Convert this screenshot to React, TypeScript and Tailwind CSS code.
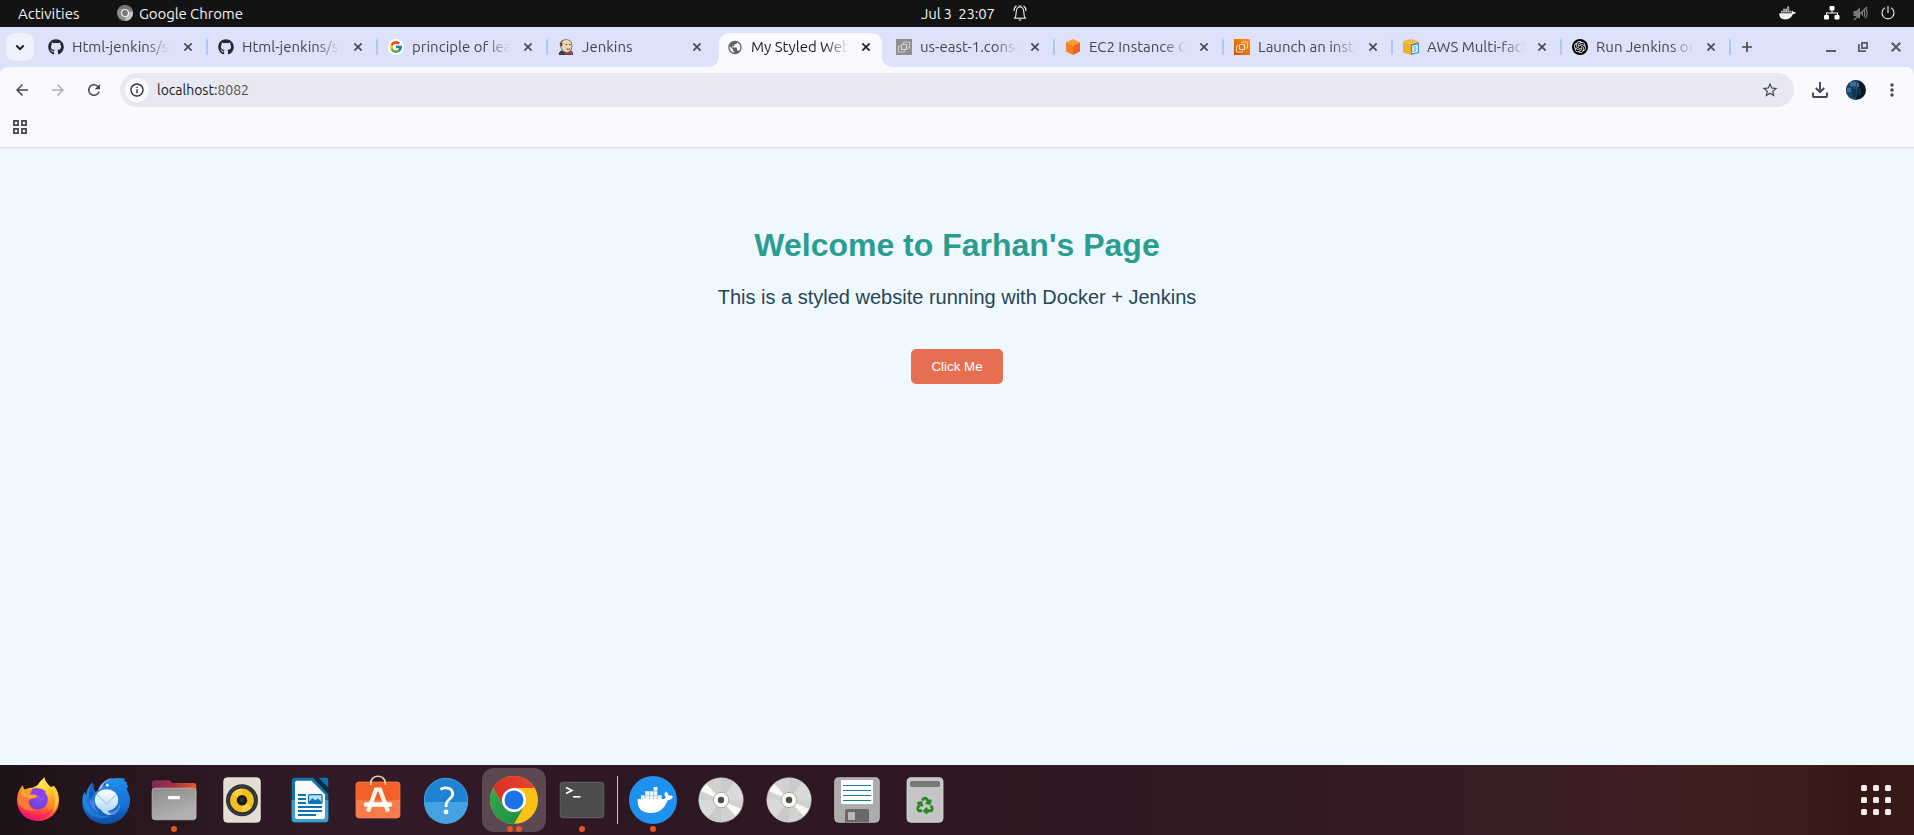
import React from "react";
import { FcGoogle } from "react-icons/fc";
import { FaGithub, FaRecycle } from "react-icons/fa";
import { SiOpenai } from "react-icons/si";
import {
  MdArrowBack,
  MdArrowForward,
  MdInfoOutline,
  MdMoreVert,
  MdPublic,
  MdRefresh,
  MdStarOutline,
} from "react-icons/md";

const uiFont = "font-['Ubuntu','Noto_Sans',sans-serif]";

/* ---------- Top panel ---------- */

function TopPanel() {
  return (
    <header className="grid h-[27px] shrink-0 grid-cols-3 items-center bg-[#131313] pb-px text-[15px] leading-none text-[#f2f2f2]">
      <div className="flex items-center pl-[18px]">
        <span className="w-[99px]">Activities</span>
        <svg width="16" height="16" viewBox="0 0 16 16" className="mr-[6px]">
          <circle cx="8" cy="8" r="8" fill="#8a8a8a" />
          <path d="M8 8 L15.8 6.5 A8 8 0 0 1 8.5 16 Z" fill="#c4c4c4" />
          <path d="M1.5 3.5 A8 8 0 0 1 15 4.4 H8 Z" fill="#747474" />
          <circle cx="8" cy="8" r="4" fill="#f0f0f0" />
          <circle cx="8" cy="8" r="2.9" fill="#777" />
        </svg>
        <span className="tracking-[-0.1px]">Google Chrome</span>
      </div>
      <div className="flex items-center justify-center pl-[34px]">
        <span className="mr-[18px] whitespace-pre tracking-[-0.2px]">Jul 3  23:07</span>
        <svg width="14" height="16" viewBox="0 0 14 16" fill="none" stroke="#eee" strokeWidth="1.1">
          <path d="M2 13 C3 11.5 3 10 3.2 7 C3.4 4 4.7 2 7 2 C9.300 2 10.600 4 10.800 7 C11 10 11 11.500 12 13" />
          <path d="M.8 13.200 H13.200" />
          <path d="M5.200 14.600 H8.800 L7 16 Z" fill="#eee" strokeWidth="0" />
          <path d="M1 6 C1 3.500 2 1.800 3.500 .8 M13 6 C13 3.500 12 1.800 10.500 .8" />
          <path d="M5.500 1 H8.500" />
        </svg>
      </div>
      <div className="flex items-center justify-end pr-[19px]">
        <svg width="17" height="14" viewBox="0 0 17 14" fill="#f2f2f2" className="mr-[28px]">
          <path d="M.3 7.200 H12.600 C13 6.500 12.500 5.500 13 4.400 C14 5 14.300 5.500 14.400 6.200 C15.300 6 16.200 6.100 16.800 6.500 C16.300 7.500 15.300 8 14 8 C12.500 11.500 10.300 13.400 6.300 13.400 C2 13.400 .1 11 .3 7.200 Z" />
          <path d="M2 4.800h1.800v1.800H2z M4.100 4.800h1.800v1.800H4.100z M6.200 4.800H8v1.800H6.200z M8.300 4.800h1.800v1.800H8.300z M10.400 4.800h1.800v1.800h-1.800z M4.100 2.700h1.800v1.800H4.100z M6.200 2.700H8v1.800H6.200z M8.300 2.700h1.800v1.800H8.300z M8.300 .6h1.800v1.800H8.300z" opacity=".8" />
        </svg>
        <svg width="16" height="14" viewBox="0 0 16 14" fill="#fff" className="mr-[13px]">
          <rect x="5.500" y="0" width="5" height="4.500" rx="1" />
          <path d="M7.500 4 h1 v3 h-1z M2 6.500 h12 v3 h-1 v-2 H3 v2 H2z" />
          <rect x="0" y="9" width="5" height="4.500" rx="1" />
          <rect x="10.500" y="9" width="5" height="4.500" rx="1" />
        </svg>
        <svg width="15" height="15" viewBox="0 0 15 15" fill="none" stroke="#888" strokeWidth="1.100" className="mr-[13px]">
          <path d="M.5 5 H3 L7 1.500 V13 L3 10 H.5 Z" fill="#777" strokeWidth="0" />
          <path d="M1 14 L14 1" stroke="#8a8a8a" />
          <path d="M9 5.500 Q10 7.500 9 9.700 M11 4 Q12.500 7.500 11 11 M13 2.500 Q15.500 7.500 12.500 12.500" />
        </svg>
        <svg width="14" height="14" viewBox="0 0 14 14" fill="none" stroke="#e8e8e8" strokeWidth="1.100">
          <path d="M7 0 V7 M4 1.700 A6 6 0 1 0 10 1.700" />
        </svg>
      </div>
    </header>
  );
}

/* ---------- Favicons ---------- */

function JenkinsIcon() {
  return (
    <svg width="16" height="16" viewBox="0 0 16 16">
      <path d="M.8 16 C.6 13 2 11.500 5 11.500 L12 11.500 C14.500 12 15.300 13.500 15 16 Z" fill="#2f4052" />
      <path d="M2 7 C.8 3 4 .2 8 .2 C12.500 .2 14.700 3.500 14.300 7.500 C14.300 11.500 12 14 8.500 14 C5 14 3.200 11 2 7 Z" fill="#6b6258" />
      <path d="M3.300 5 C3.500 2.500 5.500 1 8.500 1 C12 1 13.700 3.500 13.500 7.500 C13.500 11 11.500 13.200 9 13.200 C6 13.200 4 10.500 3 8 Z" fill="#f0d3b0" />
      <path d="M2.500 4 L4.500 3.500 L4.200 7.500 L2.800 7Z" fill="#4b463f" />
      <path d="M7.500 5.500h1.800M11 5.500h1.500M8.500 10 Q10.500 11 12 9.800" stroke="#4a3b30" strokeWidth=".9" fill="none" />
      <path d="M7.500 12.800 L10.500 13.800 L14 12.600 V16 L10.500 15 L7 16 Z" fill="#d33833" />
    </svg>
  );
}

function Ec2Icon({ muted }: { muted?: boolean }) {
  return (
    <svg width="16" height="16" viewBox="0 0 16 16">
      <defs>
        <linearGradient id="ec2" x1="0" y1="1" x2="1" y2="0">
          <stop offset="0" stopColor="#c8511b" />
          <stop offset="1" stopColor="#ff9900" />
        </linearGradient>
      </defs>
      <rect width="16" height="16" fill={muted ? "#8f8f8f" : "url(#ec2)"} />
      <g fill="none" stroke={muted ? "#d8d8d8" : "#fbe3cd"} strokeWidth=".9">
        <rect x="5.500" y="5.500" width="5" height="5" rx=".6" strokeWidth="1.200" />
        <path d="M7.500 4.500 V3 H13.500 V9 H11.500 M4.500 7 H2.500 V13 H8.500 V11.500" />
      </g>
    </svg>
  );
}

function CubeIcon() {
  return (
    <svg width="16" height="16" viewBox="0 0 16 16">
      <path d="M8 0 L15 3.300 L8 6.800 L1 3.300 Z" fill="#ff9d2e" />
      <path d="M1 3.300 L8 6.800 V16 L1 12.500 Z" fill="#f58220" />
      <path d="M15 3.300 L8 6.800 V16 L15 12.500 Z" fill="#ee6322" />
    </svg>
  );
}

function AwsDocIcon() {
  return (
    <svg width="16" height="16" viewBox="0 0 16 16">
      <path d="M0 2.600 L8 5 V16 L0 13.500 Z" fill="#f3ae2a" />
      <path d="M8 5 L15.500 2.600 V13 L8 16 Z" fill="#dd9420" />
      <path d="M0 2.200 L7.500 0 L15.500 2.200 L8 4.600 Z" fill="#f7b534" />
      <path d="M8 5.500 L16 3.800 V14 L8 15.800 Z" fill="#2c97cf" />
      <path d="M9.300 6.700 L14.800 5.500 V13 L9.300 14.300 Z" fill="#fff" />
      <path d="M10.500 8.300 L13.500 7.700 M10.500 10.300 L13.500 9.700 M10.500 12.300 L13 11.700" stroke="#2c97cf" />
    </svg>
  );
}

function CloseGlyph() {
  return (
    <svg width="8" height="8" viewBox="0 0 8 8" className="shrink-0" stroke="currentColor" strokeWidth="1.600">
      <path d="M.4 .4 L7.600 7.600 M7.600 .4 L.4 7.600" />
    </svg>
  );
}

/* ---------- Tab strip ---------- */

type TabInfo = {
  title: string;
  width: string;
  icon: React.ReactNode;
  active?: boolean;
  divider?: boolean;
};

const tabs: TabInfo[] = [
  { title: "Html-jenkins/src", width: "w-[170px]", icon: <FaGithub size={16} color="#24292f" />, divider: true },
  { title: "Html-jenkins/src", width: "w-[170px]", icon: <FaGithub size={16} color="#24292f" />, divider: true },
  {
    title: "principle of least",
    width: "w-[170px]",
    icon: (
      <span className="flex size-4 items-center justify-center rounded-full bg-white">
        <FcGoogle size={14} />
      </span>
    ),
    divider: true,
  },
  { title: "Jenkins", width: "w-[169px]", icon: <JenkinsIcon /> },
  { title: "My Styled Website", width: "w-[169px]", icon: <MdPublic size={17} color="#5f6368" />, active: true },
  { title: "us-east-1.console", width: "w-[169px]", icon: <Ec2Icon muted />, divider: true },
  { title: "EC2 Instance Co", width: "w-[169px]", icon: <CubeIcon />, divider: true },
  { title: "Launch an instan", width: "w-[169px]", icon: <Ec2Icon />, divider: true },
  { title: "AWS Multi-facto", width: "w-[169px]", icon: <AwsDocIcon />, divider: true },
  {
    title: "Run Jenkins on D",
    width: "w-[169px]",
    icon: (
      <span className="flex size-4 items-center justify-center rounded-full bg-black">
        <SiOpenai size={12} color="#fff" />
      </span>
    ),
    divider: true,
  },
];

function Tab({ tab }: { tab: TabInfo }) {
  const wide = tab.width === "w-[170px]";
  return (
    <div className={`${tab.width} relative flex h-[34px] shrink-0 items-start ${tab.active ? "text-[#1b1b1f]" : "text-[#44474e]"}`}>
      {tab.active && (
        <div className="absolute inset-y-0 right-[6px] left-0 rounded-t-[10px] bg-[#f9f9fe]">
          <svg className="absolute bottom-0 -left-[10px]" width="10" height="10" viewBox="0 0 10 10">
            <path d="M10 0 V10 H0 A10 10 0 0 0 10 0Z" fill="#f9f9fe" />
          </svg>
          <svg className="absolute -right-[10px] bottom-0" width="10" height="10" viewBox="0 0 10 10">
            <path d="M0 0 V10 H10 A10 10 0 0 1 0 0Z" fill="#f9f9fe" />
          </svg>
        </div>
      )}
      <div className="relative flex h-[28px] w-full items-center pl-2">
        <span className="mr-[8px] flex w-4 shrink-0 justify-center">{tab.icon}</span>
        <span
          className={`${wide ? "mr-[14px]" : "mr-[13px]"} w-[98px] shrink-0 overflow-hidden whitespace-nowrap text-[15px] leading-[20px] [mask-image:linear-gradient(to_right,#000_74px,transparent_98px)]`}
        >
          {tab.title}
        </span>
        <CloseGlyph />
        {tab.divider && <span className="mr-[2px] ml-auto h-4 w-[2px] rounded-full bg-[#aec6fc]" />}
      </div>
    </div>
  );
}

function TabStrip() {
  return (
    <div className="flex h-10 shrink-0 items-start bg-[#dde2fa] pt-[6px]">
      <div className="mr-[6px] ml-[6px] flex size-7 shrink-0 items-center justify-center rounded-[9px] bg-[#eff1fd]">
        <svg width="10" height="7" viewBox="0 0 10 7" fill="none" stroke="#1b1b1f" strokeWidth="1.900">
          <path d="M1.300 1.500 L5 5.200 L8.700 1.500" />
        </svg>
      </div>
      {tabs.map((tab, i) => (
        <Tab key={i} tab={tab} />
      ))}
      <div className="flex h-7 flex-1 items-center pl-[9px] text-[#44474e]">
        <svg width="10" height="10" viewBox="0 0 10 10" stroke="currentColor" strokeWidth="1.700">
          <path d="M5 0 V10 M0 5 H10" />
        </svg>
        <div className="ml-auto flex items-center pr-[13px] text-[#5d5f66]">
          <svg width="10" height="10" viewBox="0 0 10 10" className="mr-[22px]">
            <rect y="8" width="10" height="2" fill="currentColor" />
          </svg>
          <svg width="10" height="10" viewBox="0 0 10 10" fill="none" stroke="currentColor" strokeWidth="1.800" className="mr-[23px]">
            <rect x="3.900" y=".9" width="5.200" height="5.200" />
            <path d="M.9 2 V9.100 H8" />
          </svg>
          <svg width="10" height="10" viewBox="0 0 10 10" stroke="currentColor" strokeWidth="2.200">
            <path d="M.7 .7 L9.300 9.300 M9.300 .7 L.7 9.300" />
          </svg>
        </div>
      </div>
    </div>
  );
}

/* ---------- Toolbar ---------- */

function Toolbar() {
  return (
    <div className="h-[81px] shrink-0 bg-[#dde2fa]">
      <div className="flex h-full flex-col rounded-t-[8px] border-b border-[#dadfe8] bg-[#f9f9fe]">
        <div className="flex items-center pt-[6px] pl-[13px] text-[#44475a]">
          <MdArrowBack size={18} className="mr-[18px]" />
          <MdArrowForward size={18} color="#adaeb5" className="mr-[18px]" />
          <MdRefresh size={18} className="mr-[17px]" />
          <div className="flex h-[34px] w-[1674px] items-center rounded-full bg-[#e7e8f0] pl-[5px]">
            <span className="mr-2 flex size-6 items-center justify-center rounded-full bg-[#f9f9fe]">
              <MdInfoOutline size={16} color="#2b2c33" />
            </span>
            <span className="text-[14px] leading-none text-[#1b1b1f]">
              localhost:<span className="text-[#4c4e57]">8082</span>
            </span>
            <MdStarOutline size={18} className="mr-[15px] ml-auto" />
          </div>
          <svg width="16" height="16" viewBox="0 0 16 16" fill="none" stroke="currentColor" strokeWidth="1.900" className="ml-[18px]">
            <path d="M8 0 V10 M3.800 6 L8 10.200 L12.200 6 M1 10.500 V14 Q1 15 2 15 H14 Q15 15 15 14 V10.500" />
          </svg>
          <svg width="20" height="20" viewBox="0 0 20 20" className="ml-[18px]">
            <defs>
              <clipPath id="avatar">
                <circle cx="10" cy="10" r="10" />
              </clipPath>
            </defs>
            <g clipPath="url(#avatar)">
              <rect width="20" height="20" fill="#0d1826" />
              <path d="M0 4 L5 1 L12 0 V9 L10 20 H0 Z" fill="#1f4768" />
              <path d="M4 2 H10 V6 H4 Z M1 8 H5 V12 H1 Z M11 3 H13 V7 H11 Z" fill="#3a7299" />
              <path d="M6 9 H10 V17 H7 Z" fill="#15304a" />
              <path d="M12 8 H15 V15 H12 Z" fill="#1a3048" />
            </g>
          </svg>
          <MdMoreVert size={20} className="ml-4" />
        </div>
        <div className="pt-[13px] pl-[13px]">
          <svg width="14" height="14" viewBox="0 0 14 14" fill="none" stroke="#44464e" strokeWidth="1.700">
            <path d="M.9.9h4.200v4.200H.9z M8.900.9h4.200v4.200H8.900z M.9 8.900h4.200v4.200H.9z M8.900 8.900h4.200v4.200H8.900z" />
          </svg>
        </div>
      </div>
    </div>
  );
}

/* ---------- Web page ---------- */

function WebPage() {
  return (
    <main className="flex flex-1 flex-col items-center bg-[#f0f8ff] pt-[79px] font-['Liberation_Sans',Arial,sans-serif]">
      <h1 className="text-[32px] leading-[37px] font-bold text-[#2a9d8f]">Welcome to Farhan's Page</h1>
      <p className="mt-[22px] text-[20px] leading-[23px] text-[#264653]">
        This is a styled website running with Docker + Jenkins
      </p>
      <button className="mt-[40px] h-[35px] w-[92px] rounded-[5px] bg-[#e76f51] text-[13.333px] leading-[15px] text-white">
        Click Me
      </button>
    </main>
  );
}

/* ---------- Dock icons (48 x 48) ---------- */

function Svg({ children }: { children: React.ReactNode }) {
  return (
    <svg width="48" height="48" viewBox="0 0 48 48" className="overflow-visible">
      {children}
    </svg>
  );
}

function FirefoxIcon() {
  return (
    <Svg>
      <defs>
        <linearGradient id="ffBody" x1=".75" y1="0" x2=".35" y2="1">
          <stop offset="0" stopColor="#fff44f" />
          <stop offset=".35" stopColor="#ffb52e" />
          <stop offset=".62" stopColor="#ff6a35" />
          <stop offset=".85" stopColor="#ff2f56" />
          <stop offset="1" stopColor="#e31587" />
        </linearGradient>
        <linearGradient id="ffTail" x1="0" y1="0" x2=".4" y2="1">
          <stop offset="0" stopColor="#fff36b" />
          <stop offset=".55" stopColor="#ffd02e" />
          <stop offset="1" stopColor="#ff8a26" />
        </linearGradient>
        <radialGradient id="ffGlobe" cx=".6" cy=".3" r=".8">
          <stop offset="0" stopColor="#a14cff" />
          <stop offset="1" stopColor="#5b43c9" />
        </radialGradient>
      </defs>
      <path d="M3.500 19 C4.500 15 6 12.500 9 9 C9 11 9.600 12.500 11 13.500 C14 12 16 11.500 18 11.700 L24 9 C25 6 28 4 30.500 1.500 C31 6 34 8 36.500 11 L40 10 C43.500 14 45.200 19 45 25 C44.600 37 35.500 45 24.300 45 C11.500 45 3 35.500 3 24 Z" fill="url(#ffBody)" />
      <path d="M30.500 1.500 C31 7 35 8.500 38.500 13.500 C42 19 41 30 34 35 C37 26 34 19 29.500 15.500 C25 12.500 22.500 12 22.500 11.500 C24 7 28 4.500 30.500 1.500Z" fill="url(#ffTail)" />
      <path d="M40 10 C45.500 18 46 29 39 36 C42 28 42 18 40 10 Z" fill="#ffcc36" />
      <circle cx="24" cy="23.500" r="9.800" fill="url(#ffGlobe)" />
      <path d="M18 13.200 C21 11.500 30 11.800 32.500 17 C30.500 15.800 29.500 16 28.500 16.200 C31 18.500 30 21 28 22 C24 18 21 17 17 16 Z" fill="#8d3ff2" />
      <path d="M3.800 23 C4 18 8 15.500 12 16.200 C14 18.500 17 19 20.500 18.500 C23 19 24 20 22.500 21.500 C20 23 17 22 15 24.500 C13.500 28 16 33 21 34.500 C12 36 4 31 3.800 23Z" fill="#ff7a35" />
      <path d="M9 12 C9 16.500 13 18.800 21 19 C24 19.500 22.500 21.800 19 21.800 C16 22.500 9 22 6.500 17 Z" fill="#ffa436" />
      <path d="M4 28 C9 39 27 44 38 33 C32 49 8 48 4 28Z" fill="#ef185f" opacity=".5" />
    </Svg>
  );
}

function ThunderbirdIcon() {
  return (
    <Svg>
      <defs>
        <linearGradient id="tbBody" x1=".5" y1="0" x2=".6" y2="1">
          <stop offset="0" stopColor="#2390ec" />
          <stop offset=".6" stopColor="#1572d6" />
          <stop offset="1" stopColor="#0c4aa0" />
        </linearGradient>
        <linearGradient id="tbMail" x1="0" y1="0" x2="0" y2="1">
          <stop offset="0" stopColor="#fff" />
          <stop offset="1" stopColor="#b4dcfb" />
        </linearGradient>
      </defs>
      <path d="M16 14 C20 3.500 30 .5 43 2.500 C43 3.500 41.500 4 42 4.500 L45 6.500 L44.500 8 L46.500 10.500 C45 11.500 44.500 12 45 14 C47.500 18 48.500 22 47.800 27 C46 40 36 48 24 48 C10 48 .5 38 .3 26 C0 22 1 19 2.500 16 L4 19 C5 13 7.500 9 10.500 6.500 C12 9 11 13 13.500 16 Z" fill="url(#tbBody)" />
      <path d="M2.500 16 L4 24 C8 35 17 42 30 40 C16 47 2 38 1 25 Z" fill="#2f8de6" opacity=".5" />
      <path d="M10.500 6.500 C7 13 6 19 8 24 L13 17 C11.500 13 12 9 10.500 6.500Z" fill="#1460bb" />
      <path d="M16 14.500 C18 9 23 3 31 2 C24 4.500 21.500 7 20.500 11 C19 13 18 14 16 14.500Z" fill="#b69ff5" />
      <path d="M38 27 C36 36 28 37 22 35 C23 38 27 40.500 32 38.500 C37 36 39 31 38 27Z" fill="#6d9df0" opacity=".7" />
      <ellipse cx="24.500" cy="24" rx="11.700" ry="10.800" fill="url(#tbMail)" />
      <path d="M18 32 C20 37 25 39.500 30 39 C27 38 26 36.500 26 34 Z" fill="#b4dcfb" />
      <path d="M14.500 18 L24.500 28 L34.500 18.500" fill="none" stroke="#8dbce6" strokeWidth="1" />
      <path d="M8 23 C8 31 12 35 18 38 C13 34 11 29 12.500 23 C10.500 27 8.500 25 8 23Z" fill="#7f7fec" opacity=".6" />
      <circle cx="25.300" cy="9" r="1.500" fill="#e8f6ff" />
      <path d="M21.500 9.300 L24 7.500" stroke="#0d4d9b" />
    </Svg>
  );
}

function FilesIcon() {
  return (
    <Svg>
      <defs>
        <linearGradient id="flBack" x1="0" x2="1">
          <stop offset="0" stopColor="#7b2a55" />
          <stop offset=".5" stopColor="#a3324a" />
          <stop offset="1" stopColor="#e8582a" />
        </linearGradient>
        <linearGradient id="flFront" x1="0" x2=".4" y1="0" y2="1">
          <stop offset="0" stopColor="#8c8c8c" />
          <stop offset="1" stopColor="#b2b2b2" />
        </linearGradient>
      </defs>
      <path d="M2 20 V7 Q2 4.200 4.800 4.200 H19 Q20.300 4.200 21 5.500 L22 7 H43.500 Q46.300 7 46.300 9.800 V20 Z" fill="url(#flBack)" />
      <rect x="2.100" y="12.200" width="44" height="31.600" rx="3" fill="url(#flFront)" stroke="#c2c2c2" strokeWidth=".7" />
      <rect x="18" y="20" width="12" height="3.200" rx="1" fill="#fff" />
    </Svg>
  );
}

function RhythmboxIcon() {
  return (
    <Svg>
      <rect x="5.700" y="1.700" width="36.600" height="44.600" rx="3.500" fill="#e3dfd3" stroke="#f3f0e6" strokeWidth=".7" />
      <circle cx="24" cy="24.300" r="16" fill="#292b33" />
      <circle cx="24" cy="24.300" r="14.300" fill="none" stroke="#4a4c55" strokeWidth="1" />
      <circle cx="24" cy="24.300" r="11.900" fill="#f0bf20" />
      <path d="M24 24.300 L14 18 A12 12 0 0 1 24 12.400 Z M24 24.300 L34 31 A12 12 0 0 1 24 36.200Z" fill="#f8cf42" />
      <circle cx="24" cy="24.300" r="5.200" fill="#1c1a16" />
      <circle cx="24" cy="24" r="2.200" fill="#34322d" />
    </Svg>
  );
}

function WriterIcon() {
  return (
    <Svg>
      <path d="M9 1.700 H27 L42.300 18 V43 Q42.300 46.300 39 46.300 H9 Q5.700 46.300 5.700 43 V5 Q5.700 1.700 9 1.700Z" fill="#1374a8" />
      <path d="M5.700 24 H42.300 V43 Q42.300 46.300 39 46.300 H9 Q5.700 46.300 5.700 43Z" fill="#3ba2d0" />
      <path d="M11 4.700 H25.500 L39 18.500 V41 Q39 43 37 43 H11 Q9 43 9 41 V6.700 Q9 4.700 11 4.700Z" fill="#fafafa" />
      <path d="M27 1.700 L42.300 18 V10 L33 1.700Z" fill="#092c42" />
      <path d="M32.500 1.700 H40 Q42.300 1.700 42.300 4 V11.500 Z" fill="#1374a8" />
      <path d="M12 19 h8 M12 23 h8 M12 27 h8 M12 31 h24 M12 35 h24 M12 39 h18" stroke="#0b75b3" strokeWidth="1.800" />
      <rect x="22.500" y="18.700" width="13.500" height="8.800" rx="1" fill="#b5ddf3" stroke="#0b75b3" strokeWidth="1.200" />
      <path d="M23 27 V25.500 L26.500 22 L29 24.500 L32 22.500 L35.500 25.500 V27Z" fill="#0b75b3" />
    </Svg>
  );
}

function SoftwareIcon() {
  return (
    <Svg>
      <rect x="2" y="6" width="44" height="36" rx="3" fill="#f56026" stroke="#f98a5c" strokeWidth=".7" />
      <path d="M2 24 H46 V39 Q46 42 43 42 H5 Q2 42 2 39Z" fill="#f77c49" />
      <path d="M16.800 9 V7 C16.800 -2 31.200 -2 31.200 7 V9" fill="none" stroke="#f2d2a5" strokeWidth="1.700" />
      <path d="M14 35.500 L22 13.500 H26 L34 35.500" fill="none" stroke="#fbf4ef" strokeWidth="4.200" />
      <path d="M12 28.500 H36" stroke="#fff" strokeWidth="4.600" strokeLinecap="round" />
    </Svg>
  );
}

function HelpIcon() {
  return (
    <Svg>
      <circle cx="24" cy="24" r="22" fill="#1e83d3" />
      <path d="M2 26 H46 A22 22 0 0 1 2 26Z" fill="#45a2e1" />
      <circle cx="24" cy="24" r="21.700" fill="none" stroke="#4fa4e3" strokeWidth=".8" />
      <path d="M18.500 13.200 C22 11.200 30.300 10.600 30.700 17.500 C31 22.500 24.700 23.500 24.200 28 V31" fill="none" stroke="#fff" strokeWidth="2.800" />
      <circle cx="24" cy="36" r="2.400" fill="#fff" />
    </Svg>
  );
}

function ChromeIcon() {
  return (
    <Svg>
      <defs>
        <linearGradient id="chGreen" x1="0" y1="0" x2="1" y2="1">
          <stop offset="0" stopColor="#34a853" />
          <stop offset="1" stopColor="#1e8e3e" />
        </linearGradient>
        <linearGradient id="chRed" x1="0" x2="1">
          <stop offset="0" stopColor="#d93025" />
          <stop offset="1" stopColor="#ea4335" />
        </linearGradient>
      </defs>
      <circle cx="24" cy="24" r="24" fill="#fbc116" />
      <path d="M3.220 12 A24 24 0 0 1 44.780 12 H24 L13.600 30 Z" fill="url(#chRed)" />
      <path d="M3.220 12 A24 24 0 0 0 24 48 L34.400 30 H13.600 Z" fill="url(#chGreen)" />
      <circle cx="24" cy="24" r="12" fill="#fff" />
      <circle cx="24" cy="24" r="9.500" fill="#1a73e8" />
    </Svg>
  );
}

function TerminalIcon() {
  return (
    <Svg>
      <rect x="2.200" y="6.200" width="43.600" height="35.600" rx="3" fill="#4d4d4d" stroke="#696969" strokeWidth=".8" />
      <path d="M8 11.500 L14 14.500 L8 17.500" fill="none" stroke="#fff" strokeWidth="1.600" />
      <path d="M15 20.800 H22.500" stroke="#fff" strokeWidth="1.600" />
    </Svg>
  );
}

function DockerIcon() {
  return (
    <Svg>
      <circle cx="24" cy="24" r="24" fill="#1f91ee" />
      <path d="M8.700 23 H35 C36.500 22.500 36.800 22 36.500 20.500 C35 19 35 17.500 36.800 15.500 C38.800 17 39.500 18.300 39.500 19.700 C41.500 19.400 43 19.700 44 20.700 C43 22.900 41 24 38.500 24.300 C35.500 33 30 37 22 37 C12.500 37 8 32 8.700 23Z" fill="#fff" />
      <path d="M12 19.300h3.800v3.700H12z M16.200 19.300H20V23h-3.800z M20.400 19.300h3.800V23h-3.800z M24.600 19.300h3.800V23h-3.800z M28.800 19.300h3.800V23h-3.800z M16.200 15.200H20v3.700h-3.800z M20.400 15.200h3.800v3.700h-3.800z M24.600 15.200h3.800v3.700h-3.800z M24.600 11.100h3.800v3.700h-3.800z" fill="#fff" opacity=".93" />
    </Svg>
  );
}

function DiscIcon() {
  return (
    <Svg>
      <circle cx="24" cy="24" r="22.200" fill="#d2d2d2" stroke="#bcbcbc" strokeWidth=".7" />
      <path d="M24 24 V2 A22 22 0 0 1 46 24Z" fill="#dadada" />
      <path d="M24 24 V46 A22 22 0 0 1 2 24Z" fill="#dadada" />
      <path d="M24 24 L24 2 A22 22 0 0 1 37 6Z M24 24 L24 46 A22 22 0 0 1 11 42Z" fill="#cacaca" />
      <path d="M24 24 L4 15 A22 22 0 0 1 9.500 8Z M24 24 L44 33 A22 22 0 0 1 38.500 40Z" fill="#f8f8f5" />
      <circle cx="24" cy="24" r="7.700" fill="#fbfbf9" stroke="#b0a998" strokeWidth="1" />
      <circle cx="24" cy="24" r="3.200" fill="#494b50" />
    </Svg>
  );
}

function FloppyIcon() {
  return (
    <Svg>
      <rect x="1.700" y="1.700" width="44.600" height="44.600" rx="4" fill="#acacac" stroke="#c6c6c6" strokeWidth=".8" />
      <path d="M8 4 H40 V27 Q40 28 39 28 H9 Q8 28 8 27Z" fill="#fff" />
      <path d="M10 9.500 H38 M10 14.500 H38 M10 19.500 H38 M10 24.500 H38" stroke="#167da5" strokeWidth="1" />
      <path d="M12 46.300 V34.500 Q12 33 13.500 33 H34.500 Q36 33 36 34.500 V46.300Z" fill="#6a6a6a" />
      <rect x="15" y="36" width="7" height="8" rx=".8" fill="#b9b9b9" />
    </Svg>
  );
}

function TrashIcon() {
  return (
    <Svg>
      <rect x="6" y="1.700" width="36" height="44.600" rx="4" fill="#c5c5c5" stroke="#dbdbdb" strokeWidth=".8" />
      <rect x="9" y="5" width="30" height="6" rx="2" fill="#787878" />
      <FaRecycle x="15.500" y="21" size={17} color="#25881e" stroke="#25881e" strokeWidth={26} />
    </Svg>
  );
}

/* ---------- Dock ---------- */

function DockItem({ icon, dots = 0, focused }: { icon: React.ReactNode; dots?: number; focused?: boolean }) {
  return (
    <div className={`relative flex size-16 items-center justify-center rounded-[12px] ${focused ? "bg-[#5b4850]" : ""}`}>
      {icon}
      <div className="absolute inset-x-0 bottom-0 flex justify-center gap-[3px]">
        {Array.from({ length: dots }, (_, i) => (
          <span key={i} className="size-[6px] rounded-full bg-[#ea5420]" />
        ))}
      </div>
    </div>
  );
}

function Dock() {
  return (
    <footer className="flex h-[70px] shrink-0 items-center bg-[linear-gradient(90deg,#1c1217_0px,#28171f_130px,#321b29_400px,#2d1722_650px,#301923_1150px,#3a1e23_1600px,#3d201d_1700px,#3b1e1b_1800px,#341815_1860px,#381b17_1914px)] pr-[23px] pl-[6px]">
      <div className="flex gap-1">
        <DockItem icon={<FirefoxIcon />} />
        <DockItem icon={<ThunderbirdIcon />} />
        <DockItem icon={<FilesIcon />} dots={1} />
        <DockItem icon={<RhythmboxIcon />} />
        <DockItem icon={<WriterIcon />} />
        <DockItem icon={<SoftwareIcon />} />
        <DockItem icon={<HelpIcon />} />
        <DockItem icon={<ChromeIcon />} dots={2} focused />
        <DockItem icon={<TerminalIcon />} dots={1} />
      </div>
      <div className="mx-[3px] h-12 w-px bg-[#cfc9cc]" />
      <div className="flex gap-1">
        <DockItem icon={<DockerIcon />} dots={1} />
        <DockItem icon={<DiscIcon />} />
        <DockItem icon={<DiscIcon />} />
        <DockItem icon={<FloppyIcon />} />
        <DockItem icon={<TrashIcon />} />
      </div>
      <div className="ml-auto grid grid-cols-3 gap-[6px]">
        {Array.from({ length: 9 }, (_, i) => (
          <span key={i} className="size-[6px] rounded-[1.500px] bg-[#f0eeed]" />
        ))}
      </div>
    </footer>
  );
}

export default function App() {
  return (
    <div className={`flex h-screen w-full flex-col overflow-hidden ${uiFont}`}>
      <TopPanel />
      <TabStrip />
      <Toolbar />
      <WebPage />
      <Dock />
    </div>
  );
}
